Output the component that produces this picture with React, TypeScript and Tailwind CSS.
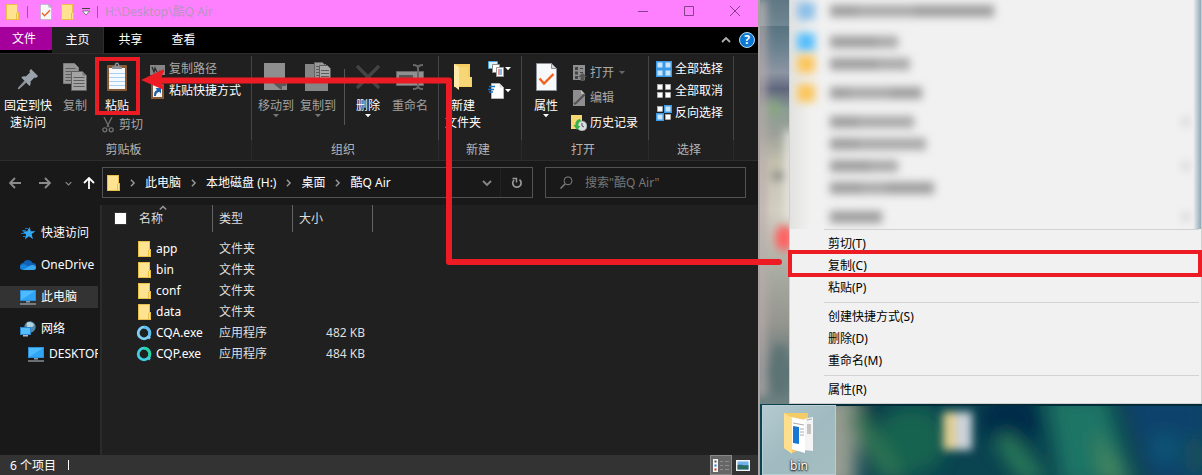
import React from "react";

type IconProps = { className?: string };

function FolderIcon({ className = "" }: IconProps) {
  return (
    <svg viewBox="0 0 13 16" className={`h-4 w-[13px] shrink-0 ${className}`} aria-hidden="true">
      <path d="M0 0h12v8h1v8H0z" fill="#e9bf4a" />
      <path d="M1 1h10v8h-1v6H1z" fill="#ffe391" />
      <path d="M11 9h1v6h-1z" fill="#ffe391" />
    </svg>
  );
}

function CheckPage({ className = "" }: IconProps) {
  return (
    <svg viewBox="0 0 21 28" className={`shrink-0 ${className}`} aria-hidden="true">
      <path d="M.5.5h15l5 5v22H.5z" fill="#f7f8fa" stroke="#8b929c" />
      <path d="M15.500 .5v5h5z" fill="#d5d9df" stroke="#8b929c" />
      <path d="M3.500 15.500l4.500 5L17.500 11" fill="none" stroke="#f2601d" strokeWidth="2.400" />
    </svg>
  );
}

function Caret({ className = "text-white" }: IconProps) {
  return (
    <svg viewBox="0 0 6 4" className={`h-1 w-1.5 shrink-0 ${className}`} aria-hidden="true">
      <path d="M0 0h6L3 3.200z" fill="currentColor" />
    </svg>
  );
}

function PinIcon() {
  return (
    <svg viewBox="0 0 22 22" className="mt-1 h-[22px] w-[22px]" aria-hidden="true">
      <path d="M14 1l7 7-2 2-1.500-.5-4 4c.4 2 0 3.600-1 4.500L4.300 9.500c1-1 2.600-1.400 4.500-1l4.200-4-.6-1.600z" fill="#9aa3ac" />
      <path d="M7.500 12.500l2 2L2.300 21l-1.500.3.3-1.600z" fill="#8a939c" />
    </svg>
  );
}

function CopyPages({ className = "" }: IconProps) {
  return (
    <svg viewBox="0 0 24 28" className={`h-7 w-6 ${className}`} aria-hidden="true">
      <path d="M.5.500h11l4 4v16H.5z" fill="#969696" stroke="#7d7d7d" />
      <path d="M2.500 5.500h10M2.500 8.500h10M2.500 11.500h10M2.500 14.500h10M2.500 17.500h10" stroke="#5d5d5d" />
      <path d="M8.500 8.500h11l4 4v15h-15z" fill="#a4a4a4" stroke="#606060" />
      <path d="M19.500 8.500v4h4z" fill="#777" />
      <path d="M10.500 14.500h11M10.500 17.500h11M10.500 20.500h11M10.500 23.500h11" stroke="#5d5d5d" />
    </svg>
  );
}

function ClipboardIcon() {
  return (
    <svg viewBox="0 0 22 30" className="h-[30px] w-[22px]" aria-hidden="true">
      <rect x="1" y="3" width="20" height="26" rx="1" fill="#8a5a36" />
      <path d="M3 6h16v21H3z" fill="#f6f9fc" />
      <path d="M3 11.500h16M3 15.500h16M3 19.500h16M3 23.500h16" stroke="#a9d2ee" />
      <path d="M6 7V4.500h2.500C8.500 2 9.500.5 11 .5s2.500 1.500 2.500 4H16V7z" fill="#8d949b" />
      <circle cx="11" cy="3" r="1" fill="#303030" />
    </svg>
  );
}

function PathIcon() {
  return (
    <svg viewBox="0 0 16 16" className="h-4 w-4" aria-hidden="true">
      <path d="M0 4h15v10H0z" fill="#858585" />
      <path d="M2 6l2 5 1-4 2 4M9 10.500h1.500M12 10.500h1.500" fill="none" stroke="#2a2a2a" strokeWidth="1.300" />
    </svg>
  );
}

function ShortcutIcon() {
  return (
    <svg viewBox="0 0 16 16" className="h-4 w-4" aria-hidden="true">
      <path d="M1 1h13v15H1z" fill="#8a5a36" />
      <path d="M3 2h9v12H3z" fill="#f4f6f8" />
      <path d="M4 13c0-4 1-5 3-6L5.500 5H11v5.500L9.200 8.800C7 9.500 6 11 6 13z" fill="#1c5fae" />
    </svg>
  );
}

function ScissorsIcon() {
  return (
    <svg viewBox="0 0 12 16" className="h-4 w-3 shrink-0" aria-hidden="true" fill="none" stroke="#707070">
      <path d="M2 0l5 10M10 0L5 10" strokeWidth="1.300" />
      <circle cx="2.800" cy="12.800" r="2" strokeWidth="1.300" />
      <circle cx="9.200" cy="12.800" r="2" strokeWidth="1.300" />
    </svg>
  );
}

function MoveToIcon() {
  return (
    <svg viewBox="0 0 28 28" className="h-7 w-7" aria-hidden="true">
      <path d="M2 0h21v17h2v10H2z" fill="#8f8f8f" />
      <path d="M10 18l9-1 7 3-6 7-2-1-5-4z" fill="#585858" />
      <path d="M20 23h4v4h-4z" fill="#8a8a8a" />
    </svg>
  );
}

function CopyToIcon() {
  return (
    <svg viewBox="0 0 28 30" className="h-[30px] w-7" aria-hidden="true">
      <path d="M1 2h21v17h2v10H1z" fill="#858585" />
      <path d="M10.500.500h8l3 3v13h-11z" fill="#999" stroke="#666" />
      <path d="M12 4.500h7M12 7.500h7M12 10.500h7M12 13.500h7" stroke="#5d5d5d" />
      <path d="M15.500 3.500h8l3 3v12h-11z" fill="#a7a7a7" stroke="#5d5d5d" />
      <path d="M17 8.500h8M17 11.500h8M17 14.500h8" stroke="#5d5d5d" />
    </svg>
  );
}

function DeleteIcon() {
  return (
    <svg viewBox="0 0 24 24" className="h-6 w-6" aria-hidden="true">
      <path d="M1 1l22 22M23 1L1 23" stroke="#444" strokeWidth="3.400" />
    </svg>
  );
}

function RenameIcon() {
  return (
    <svg viewBox="0 0 28 28" className="h-7 w-7" aria-hidden="true">
      <path d="M.5 8.500h27v14H.5z" fill="#909090" stroke="#666" />
      <path d="M3 12h14v7H3z" fill="#575757" />
      <path d="M17 2c3 0 5 .5 5 3v18c0 2.500-2 3-5 3M27 2c-3 0-5 .5-5 3M27 26c-3 0-5-.5-5-3" fill="none" stroke="#696969" strokeWidth="2" />
    </svg>
  );
}

function NewFolderIcon() {
  return (
    <svg viewBox="0 0 20 28" className="h-7 w-5" aria-hidden="true">
      <path d="M1 1h16v13h2v10H1z" fill="#f5cd63" />
      <path d="M1 1l5 3v23l-5-4z" fill="#ffe9a8" />
      <path d="M6 4h9v10h3v9H6z" fill="#f7d678" />
    </svg>
  );
}

function NewItemIcon() {
  return (
    <svg viewBox="0 0 16 16" className="h-4 w-4" aria-hidden="true">
      <path d="M.5.500h9v7h-9z" fill="#dceefa" stroke="#4fa3dd" />
      <path d="M4.500 3.500h7v8h-7z" fill="#fff" stroke="#8d8d8d" />
      <path d="M8.500 6.500h7v9h-7z" fill="#fff" stroke="#999" />
      <path d="M10 8h2v6h-2z" fill="#e79ba0" />
      <path d="M12 8h2v6h-2z" fill="#8fb8e6" />
    </svg>
  );
}

function EasyAccessIcon() {
  return (
    <svg viewBox="0 0 16 16" className="h-4 w-4" aria-hidden="true">
      <path d="M3.500.5h8l4 4v11h-12z" fill="#fff" stroke="#b5b5b5" />
      <path d="M11.500.5v4h4z" fill="#ddd" />
      <path d="M1 3.500h6M0 6.500h6M1 9h4" stroke="#1673c5" strokeWidth="1.500" />
    </svg>
  );
}

function OpenIcon() {
  return (
    <svg viewBox="0 0 16 16" className="h-4 w-4" aria-hidden="true">
      <path d="M2 0h12v15H2z" fill="#8f8f8f" />
      <path d="M4 2h3v3H4zM4 6.500h3v3H4zM4 11h3v3H4zM9 3h3v1H9zM9 7h3v1H9z" fill="#444" />
      <path d="M11.500 8L16 12h-2.500v4h-4v-4H7z" fill="#555" />
    </svg>
  );
}

function EditIcon() {
  return (
    <svg viewBox="0 0 16 16" className="h-4 w-4" aria-hidden="true">
      <path d="M2 0h8l4 4v12H2z" fill="#8e8e8e" />
      <path d="M10 0v4h4z" fill="#bbb" />
      <path d="M14 4L5 13l-2 1" stroke="#515151" strokeWidth="2" fill="none" />
    </svg>
  );
}

function HistoryIcon() {
  return (
    <svg viewBox="0 0 16 16" className="h-4 w-4" aria-hidden="true">
      <path d="M0 0h11v6h1v8H0z" fill="#f7d772" />
      <circle cx="11" cy="11" r="5" fill="#d9dde0" stroke="#86898c" strokeWidth=".7" />
      <path d="M11 8v3l2 1" stroke="#555" fill="none" />
      <path d="M9 4C6 4.500 4 7 4.500 10H2.500l3.500 5 3.500-4H7.500C7 8.500 8 6.500 10 6z" fill="#37b34a" />
    </svg>
  );
}

function SelectIcon({ cells }: { cells: boolean[] }) {
  return (
    <svg viewBox="0 0 16 16" className="h-4 w-4 shrink-0" aria-hidden="true">
      {cells.map((on, i) => {
        const x = (i % 2) * 8;
        const y = i > 1 ? 8 : 0;
        return on ? (
          <g key={i}>
            <rect x={x} y={y} width="8" height="8" fill="#3c9be6" />
            <rect x={x + 1.500} y={y + 1.500} width="5" height="5" fill="#c9e5fa" />
          </g>
        ) : (
          <rect key={i} x={x + 1.500} y={y + 1.500} width="5" height="5" fill="#fff" stroke="#bbb" strokeWidth=".6" />
        );
      })}
    </svg>
  );
}

function MonitorIcon() {
  return (
    <svg viewBox="0 0 16 16" className="h-4 w-4 shrink-0" aria-hidden="true">
      <path d="M0 1h16v11H0z" fill="#2f8fd6" />
      <path d="M1 2h14v9H1z" fill="#4cbcff" />
      <path d="M1 11L15 2v9z" fill="#31a5f5" />
      <path d="M6 12h4v1.500H6z" fill="#8aa0b0" />
      <path d="M0 14.500h16v1H0z" fill="#b9c7d2" />
    </svg>
  );
}

function StarIcon() {
  return (
    <svg viewBox="0 0 16 16" className="h-4 w-4 shrink-0" aria-hidden="true">
      <path d="M9.500 2l1.300 4.200 4.700.1-3.900 2.800L13 14l-4.200-2.700L5 14.500l1.100-5L2.500 6.500l4.700-.2z" fill="#34aaf5" />
      <path d="M2 5.500h4M1 8.500h4M3 11.500h3M5 3.500h3" stroke="#1473bd" />
    </svg>
  );
}

function CloudIcon() {
  return (
    <svg viewBox="0 0 16 12" className="h-3 w-4 shrink-0" aria-hidden="true">
      <path d="M3 10a3 3 0 01.2-6A5 5 0 0112.400 4 3.500 3.500 0 0113 11H3z" fill="#0f62b5" />
      <path d="M0 8.500C0 5.500 3.500 4.500 6 6l7 5H3c-1.800 0-3-1-3-2.500z" fill="#1684dc" />
      <path d="M3 11l7-4.500c3-1.500 6 0 6 2.200 0 1.300-1 2.300-2.500 2.300z" fill="#38a9ef" />
    </svg>
  );
}

function NetworkIcon() {
  return (
    <svg viewBox="0 0 16 16" className="h-4 w-4 shrink-0" aria-hidden="true">
      <circle cx="10" cy="6" r="5.700" fill="#5489a8" />
      <path d="M7 1.500c3-1 6 0 7 2.500-1 3-4 1-5 4-2-1-3-4-2-6.500z" fill="#b3d3df" />
      <path d="M0 6h11v8H0z" fill="#2c87cf" />
      <path d="M1 7h9v6H1z" fill="#55bdfb" />
      <path d="M3 14h5v1.500H3z" fill="#aebdc9" />
    </svg>
  );
}

function RingIcon({ tone }: { tone: "blue" | "teal" }) {
  const a = tone === "blue" ? "#7fd0f7" : "#3fcfe0";
  const b = tone === "blue" ? "#5cc0f0" : "#22d6a4";
  return (
    <svg viewBox="0 0 16 16" className="h-4 w-4 shrink-0" aria-hidden="true" fill="none">
      <circle cx="8" cy="8" r="5.800" stroke={a} strokeWidth="2.800" />
      <path d="M8 2.200a5.800 5.800 0 015 8.700" stroke={b} strokeWidth="2.800" />
      <path d="M12.500 12l1.500 1.500" stroke={a} strokeWidth="2.500" />
    </svg>
  );
}

function Chevron({ dir, className = "" }: { dir: "right" | "down" | "up"; className?: string }) {
  const d = dir === "right" ? "M3 1l4 4-4 4" : dir === "down" ? "M1 3l4 4 4-4" : "M1 7l4-4 4 4";
  return (
    <svg viewBox="0 0 10 10" className={`shrink-0 ${className}`} aria-hidden="true">
      <path d={d} fill="none" stroke="currentColor" strokeWidth="1.800" />
    </svg>
  );
}

type BigProps = {
  icon: React.ReactNode;
  label: React.ReactNode;
  width: string;
  dim?: boolean;
  caret?: boolean;
  marked?: boolean;
};

function BigButton({ icon, label, width, dim, caret, marked }: BigProps) {
  return (
    <button
      className={`relative flex shrink-0 flex-col items-center whitespace-nowrap pt-[5px] ${width} ${dim ? "text-[#a0a0a0]" : "text-white"}`}
    >
      <span className="flex h-8 items-center justify-center">{icon}</span>
      <span className="mt-1 block text-center leading-[17px]">{label}</span>
      {caret && <Caret className={dim ? "text-[#777]" : "text-white"} />}
      {marked && <span className="absolute top-px right-0 bottom-0 left-px border-4 border-[#ed1c24]" />}
    </button>
  );
}

function SmallButton({ icon, label, dim, caret, tall }: { icon: React.ReactNode; label: string; dim?: boolean; caret?: boolean; tall?: boolean }) {
  return (
    <button
      aria-label={label}
      className={`flex items-center gap-[3px] whitespace-nowrap ${tall ? "h-[25px]" : "h-[22px]"} ${dim ? "text-[#a8a8a8]" : "text-white"}`}
    >
      {icon}
      {label}
      {caret && <Caret className="ml-0.5 text-[#666]" />}
    </button>
  );
}

function Group({ title, width, children }: { title: string; width: string; children: React.ReactNode }) {
  return (
    <section className={`flex shrink-0 flex-col pt-0.5 ${width}`}>
      <div className="flex h-[84px] items-start border-r border-[#444]">{children}</div>
      <h2 className="h-5 border-r border-[#2a2a2a] pr-1 text-center leading-5 text-[#b5b5b5]">{title}</h2>
    </section>
  );
}

function TitleBar() {
  return (
    <header className="flex h-[27px] items-start bg-[#ff80ff]">
      <div className="flex h-6 items-center pl-1.5">
        <FolderIcon />
        <span className="ml-2 h-3 w-px bg-[#a050a0]" />
        <CheckPage className="ml-3 h-4 w-3" />
        <FolderIcon className="ml-[9px]" />
        <svg viewBox="0 0 8 8" className="ml-2 h-2 w-2" aria-hidden="true">
          <path d="M0 .5h8" stroke="#444" />
          <path d="M.5 3h7L4 7z" fill="#fff" stroke="#555" strokeWidth=".7" />
        </svg>
        <span className="ml-[7px] h-3 w-px bg-[#a050a0]" />
        <h1 className="ml-[7px] whitespace-pre text-[#b993bd]">H:\Desktop\酷Q Air</h1>
      </div>
      <div className="ml-auto flex h-[22px] text-[#87408a]">
        <button aria-label="最小化" className="flex w-[46px] items-center justify-center">
          <svg viewBox="0 0 10 10" className="h-2.5 w-2.5"><path d="M0 5.500h10" stroke="currentColor" /></svg>
        </button>
        <button aria-label="最大化" className="flex w-[46px] items-center justify-center">
          <svg viewBox="0 0 10 10" className="h-2.5 w-2.5"><path d="M.5.500h9v9h-9z" fill="none" stroke="currentColor" /></svg>
        </button>
        <button aria-label="关闭" className="flex w-[46px] items-center justify-center">
          <svg viewBox="0 0 10 10" className="h-2.5 w-2.5"><path d="M0 0l10 10M10 0L0 10" stroke="currentColor" /></svg>
        </button>
      </div>
    </header>
  );
}

function Tabs() {
  return (
    <nav className="flex h-[26px] bg-black text-white">
      <button className="h-[23px] w-[52px] bg-[#a6009c] pr-1">文件</button>
      <button className="w-[52px] border-r border-[#2d2d2d] bg-[#202020]">主页</button>
      <button className="w-[53px]">共享</button>
      <button className="w-[53px]">查看</button>
      <div className="ml-auto flex items-center gap-2 pr-[3px]">
        <button aria-label="最小化功能区" className="text-[#b0b0b0]">
          <Chevron dir="up" className="h-2.5 w-2.5" />
        </button>
        <button aria-label="帮助" className="flex h-4 w-4 items-center justify-center rounded-full border border-[#b9d9f2] bg-[#0d78d4] text-xs leading-none font-bold">
          ?
        </button>
      </div>
    </nav>
  );
}

function Ribbon() {
  return (
    <div className="flex h-[108px] overflow-hidden border-y border-[#2d2d2d] bg-[#202020]">
      <Group title="剪贴板" width="w-[252px]">
        <BigButton width="w-14" icon={<PinIcon />} label={<>固定到快<br />速访问</>} />
        <div className="w-[84px] shrink-0">
          <div className="flex h-[59px]">
            <BigButton width="w-[38px]" icon={<CopyPages />} label="复制" dim />
            <BigButton width="w-[46px]" icon={<ClipboardIcon />} label="粘贴" marked />
          </div>
          <button className="ml-[46px] flex h-5 items-center gap-[5px] whitespace-nowrap text-[#a8a8a8]">
            <ScissorsIcon />
            剪切
          </button>
        </div>
        <div className="pt-0.5 pl-2.5">
          <SmallButton icon={<PathIcon />} label="复制路径" dim />
          <SmallButton icon={<ShortcutIcon />} label="粘贴快捷方式" />
        </div>
      </Group>
      <Group title="组织" width="w-[187px]">
        <div className="flex pl-[3px]">
          <BigButton width="w-[42px]" icon={<MoveToIcon />} label="移动到" dim caret />
          <BigButton width="w-[42px]" icon={<CopyToIcon />} label="复制到" dim caret />
          <span className="mt-[13px] ml-[5px] h-14 w-px bg-[#555]" />
          <BigButton width="w-[46px]" icon={<DeleteIcon />} label="删除" caret />
          <BigButton width="w-[38px]" icon={<RenameIcon />} label="重命名" dim />
        </div>
      </Group>
      <Group title="新建" width="w-[83px]">
        <BigButton width="w-12" icon={<NewFolderIcon />} label={<>新建<br />文件夹</>} />
        <div className="pt-0.5 pl-px">
          <button aria-label="新建项目" className="flex h-[22px] items-center gap-px"><NewItemIcon /><Caret /></button>
          <button aria-label="轻松访问" className="flex h-[22px] items-center gap-px"><EasyAccessIcon /><Caret /></button>
        </div>
      </Group>
      <Group title="打开" width="w-[127px]">
        <BigButton width="w-12" icon={<CheckPage className="h-7 w-[21px]" />} label="属性" caret />
        <div className="pt-1 pl-px">
          <SmallButton tall icon={<OpenIcon />} label="打开" dim caret />
          <SmallButton tall icon={<EditIcon />} label="编辑" dim />
          <SmallButton tall icon={<HistoryIcon />} label="历史记录" />
        </div>
      </Group>
      <Group title="选择" width="w-[85px]">
        <div className="pt-0.5 pl-[7px]">
          <SmallButton icon={<SelectIcon cells={[true, true, true, true]} />} label="全部选择" />
          <SmallButton icon={<SelectIcon cells={[false, false, false, false]} />} label="全部取消" />
          <SmallButton icon={<SelectIcon cells={[false, true, true, false]} />} label="反向选择" />
        </div>
      </Group>
    </div>
  );
}

const crumbs = ["此电脑", "本地磁盘 (H:)", "桌面", "酷Q Air"];

function Arrow({ d, className }: { d: string; className: string }) {
  return (
    <svg viewBox="0 0 12 12" className={`h-3 w-3 ${className}`} aria-hidden="true">
      <path d={d} fill="none" stroke="currentColor" strokeWidth="1.800" />
    </svg>
  );
}

function AddressBar() {
  return (
    <div className="flex h-11 items-start bg-[#191919] pt-1.5 pr-3">
      <div className="flex h-8 w-[102px] shrink-0 items-center pl-[9px]">
        <button aria-label="后退"><Arrow className="text-[#8b8b8b]" d="M12 6H1M6 1L1 6l5 5" /></button>
        <button aria-label="前进" className="ml-[18px]"><Arrow className="text-[#8b8b8b]" d="M0 6h11M6 1l5 5-5 5" /></button>
        <button aria-label="最近位置" className="ml-3.5 text-[#888]"><Chevron dir="down" className="h-[7px] w-[7px]" /></button>
        <button aria-label="向上" className="ml-[11px]"><Arrow className="text-white" d="M6 12V1M1 6l5-5 5 5" /></button>
      </div>
      <div className="flex h-[31px] min-w-0 flex-1 items-center border border-[#535353] pl-1">
        <FolderIcon />
        {crumbs.map((c) => (
          <React.Fragment key={c}>
            <Chevron dir="right" className="mx-[7px] h-2 w-[11px] text-[#999]" />
            <a href="#" className="whitespace-nowrap text-white">{c}</a>
          </React.Fragment>
        ))}
        <button aria-label="以前的位置" className="ml-auto text-[#888]"><Chevron dir="down" className="h-2.5 w-2.5" /></button>
        <button aria-label="刷新" className="ml-2 flex h-full w-8 items-center justify-center border-l border-[#222] text-[#999]">
          <svg viewBox="0 0 12 12" className="h-3 w-3" fill="none" stroke="currentColor" strokeWidth="1.700">
            <path d="M8.500 2.700A4.200 4.200 0 113 3" />
            <path d="M1.500 1.500h4v4" strokeWidth="1.400" />
          </svg>
        </button>
      </div>
      <label className="ml-3 flex h-[31px] w-[201px] min-w-0 items-center border border-[#535353] pl-3.5">
        <svg viewBox="0 0 13 13" className="h-[13px] w-[13px] shrink-0 text-[#808080]" fill="none" stroke="currentColor">
          <circle cx="8" cy="4.800" r="4" />
          <path d="M5 8L.5 12.500" strokeWidth="1.400" />
        </svg>
        <input
          aria-label="搜索"
          placeholder={'搜索"酷Q Air"'}
          className="ml-3 w-full min-w-0 bg-transparent outline-none placeholder:text-[#777]"
        />
      </label>
    </div>
  );
}

function SideItem({ icon, label, selected, nested, height }: { icon: React.ReactNode; label: string; selected?: boolean; nested?: boolean; height: string }) {
  return (
    <li className={`flex items-center ${height}`}>
      <a
        href="#"
        className={`flex h-[22px] w-full items-center gap-[5px] overflow-hidden whitespace-nowrap text-white ${nested ? "pl-7" : "pl-5"} ${selected ? "bg-[#333]" : ""}`}
      >
        {icon}
        {label}
      </a>
    </li>
  );
}

const files = [
  { name: "app", kind: "文件夹", size: "" },
  { name: "bin", kind: "文件夹", size: "" },
  { name: "conf", kind: "文件夹", size: "" },
  { name: "data", kind: "文件夹", size: "" },
  { name: "CQA.exe", kind: "应用程序", size: "482 KB", tone: "blue" as const },
  { name: "CQP.exe", kind: "应用程序", size: "484 KB", tone: "teal" as const },
];

function FileTable() {
  return (
    <table className="table-fixed border-separate border-spacing-0 text-left">
      <colgroup>
        <col className="w-[111px]" />
        <col className="w-20" />
        <col className="w-20" />
      </colgroup>
      <thead>
        <tr className="h-[27px] text-[#dedede]">
          <th className="relative border-r border-[#636363] p-0 font-normal">
            <div className="flex items-center pl-3">
              <input type="checkbox" aria-label="全选" className="h-[13px] w-[13px] appearance-none border border-[#333] bg-white" />
              <span className="ml-3">名称</span>
            </div>
            <Chevron dir="up" className="absolute -top-px left-14 h-2 w-2.5 text-[#999]" />
          </th>
          <th className="border-r border-[#636363] p-0 pl-1.5 font-normal">类型</th>
          <th className="border-r border-[#636363] p-0 pl-1.5 font-normal">大小</th>
        </tr>
      </thead>
      <tbody>
        <tr className="h-1.5" aria-hidden="true"><td colSpan={3} className="p-0" /></tr>
        {files.map((f) => (
          <tr key={f.name} className="h-[21px] text-[#dedede]">
            <td className="p-0">
              <div className="flex items-center pl-[34px] whitespace-nowrap text-white">
                <span className="mr-1 flex w-4 shrink-0 justify-center">
                  {f.tone ? <RingIcon tone={f.tone} /> : <FolderIcon />}
                </span>
                {f.name}
              </div>
            </td>
            <td className="p-0 pl-1.5">{f.kind}</td>
            <td className="p-0 pr-2 text-right">{f.size}</td>
          </tr>
        ))}
      </tbody>
    </table>
  );
}

function StatusBar() {
  return (
    <footer className="flex h-5 items-center bg-[#333] pl-2.5 text-white">
      <span className="pt-0.5">6 个项目</span>
      <span className="ml-3 h-2.5 w-px bg-white" />
      <div className="ml-auto flex h-full items-center pr-2">
        <button aria-label="详细信息" className="flex h-full w-[22px] items-center justify-center border border-[#888] bg-[#666]">
          <svg viewBox="0 0 16 13" className="h-[13px] w-4">
            <path d="M0 0h5v13H0z" fill="#f5f5f5" />
            <path d="M1.500 1.500h2v2h-2z" fill="#555" />
            <path d="M1.500 5.500h2v2h-2z" fill="#2f77d0" />
            <path d="M1.500 9.500h2v2h-2z" fill="#d33" />
            <path d="M7 2.500h3M12 2.500h4M7 6.500h3M12 6.500h4M7 10.500h3M12 10.500h4" stroke="#8d8d8d" />
          </svg>
        </button>
        <button aria-label="大图标" className="ml-1">
          <svg viewBox="0 0 14 11" className="h-[11px] w-3.5">
            <path d="M0 0h14v11H0z" fill="#f5f5f5" />
            <path d="M1.500 1.500h11v8h-11z" fill="#6fb1ee" />
            <path d="M1.500 5c4-1 6 1 11 0v4.500h-11z" fill="#2d6a63" />
          </svg>
        </button>
      </div>
    </footer>
  );
}

function Explorer() {
  return (
    <main className="flex min-h-screen min-w-0 flex-col border-r-2 border-[#aaa3a3] bg-[#202020]">
      <TitleBar />
      <Tabs />
      <Ribbon />
      <AddressBar />
      <div className="flex flex-1">
        <aside className="w-[102px] shrink-0 border-r-2 border-[#2b2b2b] bg-[#191919] pt-3 pr-0.5">
          <ul>
            <SideItem height="h-8" icon={<StarIcon />} label="快速访问" />
            <SideItem height="h-8" icon={<CloudIcon />} label="OneDrive" />
            <SideItem height="h-8" icon={<MonitorIcon />} label="此电脑" selected />
            <SideItem height="h-8" icon={<NetworkIcon />} label="网络" />
            <SideItem height="h-[18px]" icon={<MonitorIcon />} label="DESKTOP" nested />
          </ul>
        </aside>
        <div className="min-w-0 flex-1">
          <FileTable />
        </div>
      </div>
      <StatusBar />
    </main>
  );
}

function Wallpaper() {
  return (
    <svg className="absolute inset-0 h-full w-full" viewBox="0 0 442 475" preserveAspectRatio="none" aria-hidden="true">
      <defs>
        <filter id="soft" x="-10%" y="-60%" width="120%" height="220%"><feGaussianBlur stdDeviation="9" /></filter>
        <filter id="fine" x="-50%" y="-50%" width="200%" height="200%"><feGaussianBlur stdDeviation="4" /></filter>
        <linearGradient id="strip" x1="0" y1="0" x2="0" y2="1">
          <stop offset="0" stopColor="#43606e" />
          <stop offset=".12" stopColor="#6b8290" />
          <stop offset=".18" stopColor="#8d95a3" />
          <stop offset=".22" stopColor="#5f667d" />
          <stop offset=".27" stopColor="#8b9d93" />
          <stop offset=".33" stopColor="#9ba097" />
          <stop offset=".4" stopColor="#c2bfae" />
          <stop offset=".52" stopColor="#d3cec2" />
          <stop offset=".68" stopColor="#a7aaa0" />
          <stop offset=".8" stopColor="#95958f" />
          <stop offset=".92" stopColor="#5c7476" />
          <stop offset="1" stopColor="#6e8180" />
        </linearGradient>
      </defs>
      <rect width="442" height="475" fill="#0a4450" />
      <g filter="url(#soft)">
        <rect x="50" y="395" width="46" height="95" fill="#989d92" />
        <ellipse cx="112" cy="415" rx="14" ry="24" fill="#0c3a48" />
        <ellipse cx="152" cy="440" rx="34" ry="34" fill="#14644f" />
        <path d="M100 405l46 75h-24l-36-60z" fill="#2f7352" />
        <ellipse cx="250" cy="420" rx="30" ry="28" fill="#012c4a" />
        <path d="M286 395h60l26 90h-70z" fill="#1c7565" />
        <path d="M246 430l44 50h-30l-24-36z" fill="#2b7c59" />
        <path d="M334 428l40 56h-32z" fill="#42855f" />
        <path d="M360 390h90v95h-60z" fill="#0c426c" />
        <ellipse cx="405" cy="448" rx="14" ry="16" fill="#075474" />
        <ellipse cx="436" cy="456" rx="12" ry="20" fill="#154f5c" />
      </g>
      <rect x="0" y="0" width="30" height="404" fill="url(#strip)" />
      <g filter="url(#fine)">
        <rect x="-3" y="0" width="9" height="396" fill="#b9abab" opacity=".85" />
        <ellipse cx="14" cy="108" rx="5" ry="9" fill="#87a77e" />
        <ellipse cx="20" cy="176" rx="9" ry="5" fill="#908f86" />
        <rect x="25" y="130" width="8" height="90" fill="#e8e8e4" />
        <ellipse cx="24" cy="238" rx="9" ry="13" fill="#ff6262" />
        <ellipse cx="20" cy="370" rx="9" ry="26" fill="#5d7375" />
      </g>
      <rect x="0" y="0" width="29" height="26" fill="#fff" opacity=".15" />
      <rect x="29" y="403" width="413" height="3" fill="#032c38" />
      <g filter="url(#fine)">
        <path d="M183 412h16v38h-16z" fill="#e0cd8d" />
        <path d="M196 412h16v38h-16z" fill="#ccd3da" />
      </g>
    </svg>
  );
}

type Redacted = { icon?: string; widths: string[]; more?: boolean; ruled?: boolean };

const redacted: Redacted[] = [
  { icon: "bg-[#8cbfe8]", widths: ["w-7", "w-14", "w-20"] },
  { icon: "bg-[#55bdfb]", widths: ["w-12", "w-5"], ruled: true },
  { icon: "bg-[#fbc55b]", widths: ["w-12", "w-8"] },
  { icon: "bg-[#fbc55b]", widths: ["w-5", "w-10", "w-8"], ruled: true },
  { widths: ["w-7", "w-14"], more: true, ruled: true },
  { widths: ["w-7", "w-[68px]"] },
  { widths: ["w-10", "w-7"], more: true },
  { widths: ["w-8", "w-6", "w-12"] },
  { widths: ["w-[52px]"], more: true, ruled: true },
];

function RedactedRow({ row, first }: { row: Redacted; first: boolean }) {
  return (
    <li aria-hidden="true" className={`flex h-[22px] shrink-0 items-center ${first ? "mb-0.5" : ""} ${row.ruled ? "mt-[7px]" : ""}`}>
      <span className="flex w-9 shrink-0 justify-center pr-2 pl-1">
        {row.icon && <span className={`h-[18px] w-[18px] blur-[4px] ${row.icon}`} />}
      </span>
      <span className="flex pl-1 blur-[4px]">
        {row.widths.map((w, i) => (
          <span key={i} className={`h-3 ${w} ${i % 2 ? "bg-[#a8a8a8]" : "bg-[#9d9d9d]"}`} />
        ))}
      </span>
      {row.more && <span className="mr-3 ml-auto h-2 w-1.5 bg-[#ccc] blur-[4px]" />}
    </li>
  );
}

function MenuItem({ label, marked }: { label: string; marked?: boolean }) {
  return (
    <li className="relative h-[22px]">
      <button className="h-full w-full pl-[38px] text-left whitespace-nowrap text-black">{label}</button>
      {marked && <span className="absolute -top-[5px] -right-px bottom-0 -left-0.5 border-4 border-[#ed1c24]" />}
    </li>
  );
}

function Rule() {
  return <li role="separator" className="my-[3px] mr-0.5 ml-[34px] h-px bg-[#d2d2d2]" />;
}

function ContextMenu() {
  return (
    <div className="relative ml-[29px] h-[404px] border-x border-b border-[#cfcfcf] bg-[#f1f1f1]">
      <ul className="flex h-[229px] flex-col overflow-hidden bg-gradient-to-r from-[#e2e2e0] via-[#f1f1f1] via-5% to-[#f1f1f1] pb-1">
        {redacted.map((r, i) => (
          <RedactedRow key={i} row={r} first={i === 0} />
        ))}
      </ul>
      <span className="absolute top-0 right-0 h-[229px] w-2 bg-gradient-to-r from-[#f1f1f1] to-[#8eabb8]" />
      <ul>
        <li role="separator" className="mr-0.5 mb-[3px] ml-[34px] h-px bg-[#d2d2d2]" />
        <MenuItem label="剪切(T)" />
        <MenuItem label="复制(C)" marked />
        <MenuItem label="粘贴(P)" />
        <Rule />
        <MenuItem label="创建快捷方式(S)" />
        <MenuItem label="删除(D)" />
        <MenuItem label="重命名(M)" />
        <Rule />
        <MenuItem label="属性(R)" />
      </ul>
    </div>
  );
}

function DesktopFolder() {
  return (
    <button className="relative mt-px ml-0.5 flex h-[70px] w-[74px] flex-col items-center border border-[#b9cdd2] bg-gradient-to-br from-[#b4cad0] via-[#9fbac0] to-[#a5bec0] pt-1.5 text-white">
      <svg viewBox="0 0 32 42" className="h-[42px] w-8" aria-hidden="true">
        <path d="M1 1l24 0v34L9 41 1 36z" fill="#f3cc68" />
        <path d="M21 7l9-2v34l-9-1z" fill="#f4f4f4" />
        <path d="M24 12h4v10h-4z" fill="#c5c5c5" />
        <path d="M8 5l14 3v33L8 37z" fill="#fff" />
        <path d="M10 14l6 1v17l-6-1z" fill="#1976d2" />
        <path d="M17 17h4M17 20h4M17 23h4M10 11l11 2M24 8l5-1" stroke="#aaa" />
        <path d="M1 1l8 5v36l-8-6z" fill="#ffdf8c" />
      </svg>
      <span className="mt-1 leading-4 [text-shadow:0_1px_2px_#000,0_0_2px_#000]">bin</span>
    </button>
  );
}

function PointerArrow() {
  return (
    <svg className="pointer-events-none absolute top-0 left-0 h-[475px] w-[1202px]" viewBox="0 0 1202 475" aria-hidden="true">
      <path d="M779 262H449V80.500H158" fill="none" stroke="#ed1c24" strokeWidth="6" strokeLinejoin="round" strokeLinecap="round" />
      <path d="M141 80l23-11-3 11 3 10z" fill="#ed1c24" />
    </svg>
  );
}

export default function App() {
  return (
    <div className="relative grid min-h-screen grid-cols-[minmax(0,760fr)_minmax(0,442fr)] overflow-hidden bg-[#202020] text-xs leading-4 [font-family:'Noto_Sans','Noto_Sans_CJK_SC',sans-serif]">
      <Explorer />
      <section className="relative">
        <Wallpaper />
        <ContextMenu />
        <DesktopFolder />
      </section>
      <PointerArrow />
    </div>
  );
}
